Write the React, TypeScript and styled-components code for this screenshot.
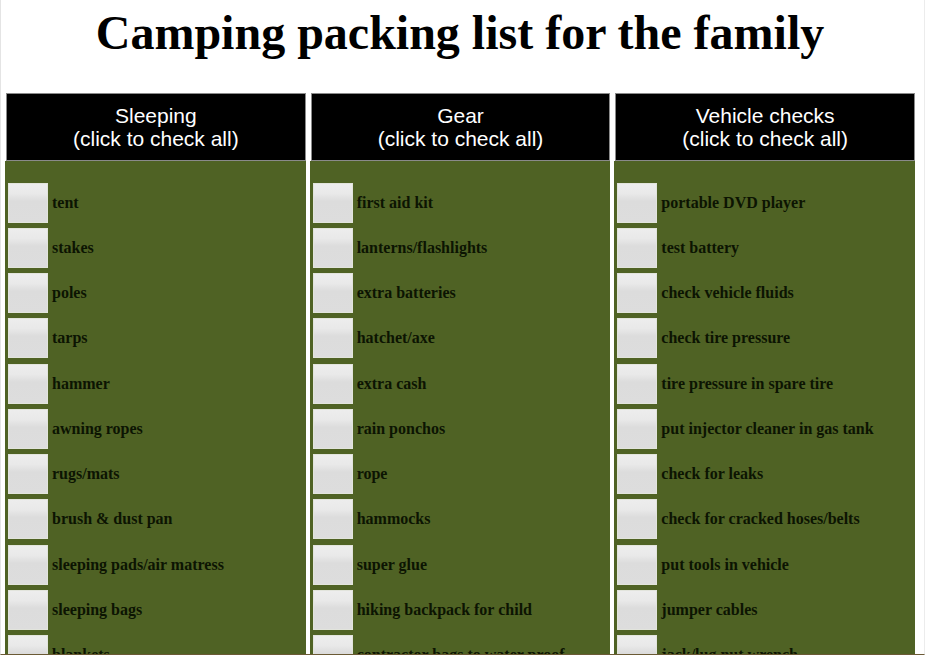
import React, { useState } from "react";
import styled, { createGlobalStyle } from "styled-components";

const GlobalStyle = createGlobalStyle`
  *, *::before, *::after { box-sizing: border-box; }
  body {
    margin: 0;
    background: #fff;
    color: #000;
    font-family: "Liberation Serif", "Times New Roman", serif;
  }
`;

const Page = styled.main`
  height: 100vh;
  overflow: hidden;
  padding: 0 9px 0 4px;
  border-left: 1px solid #e4e4e4;
  border-right: 1px solid #ececec;
  border-bottom: 1px solid #6b5a35;
`;

const Title = styled.h1`
  margin: 0;
  padding: 5px 0 32px;
  font-size: 48px;
  line-height: 56px;
  text-align: center;
`;

const Columns = styled.div`
  display: grid;
  grid-template-columns: repeat(3, minmax(0, 1fr));
  column-gap: 4px;
`;

const Column = styled.section`
  display: flex;
  flex-direction: column;
`;

const CheckAll = styled.button`
  margin: 0 0 0 1px;
  padding: 10px 6px;
  border: 1px solid #8a8a8a;
  border-radius: 0;
  background: #000;
  color: #fff;
  font-family: "Liberation Sans", Arial, sans-serif;
  font-size: 21px;
  line-height: 23px;
  cursor: pointer;
`;

const HeaderLine = styled.span`
  display: block;
`;

const Items = styled.ul`
  display: flex;
  flex-direction: column;
  min-height: 521px;
  margin: 0;
  padding: 19px 3px 4px;
  list-style: none;
  background: #4f6224;
`;

const Item = styled.li`
  display: flex;
  flex: 1;
  align-items: center;
`;

const ItemLabel = styled.label`
  display: flex;
  align-items: center;
  gap: 4px;
  color: #0c1402;
  font-size: 16px;
  font-weight: bold;
  line-height: 18px;
  white-space: nowrap;
  cursor: pointer;
`;

const Tick = styled.input`
  appearance: none;
  flex: none;
  width: 40px;
  height: 40px;
  margin: 0;
  border: 1px solid #e2e4dc;
  background: linear-gradient(#ededed, #e9e9e9 25%, #dcdcdc 45%, #dddddd);
  cursor: pointer;

  &:checked {
    background: #86b83c;
  }
`;

const lists = [
  {
    name: "Sleeping",
    items: [
      "tent", "stakes", "poles", "tarps", "hammer", "awning ropes", "rugs/mats",
      "brush & dust pan", "sleeping pads/air matress", "sleeping bags", "blankets",
    ],
  },
  {
    name: "Gear",
    items: [
      "first aid kit", "lanterns/flashlights", "extra batteries", "hatchet/axe",
      "extra cash", "rain ponchos", "rope", "hammocks", "super glue",
      "hiking backpack for child", "contractor bags to water proof",
    ],
  },
  {
    name: "Vehicle checks",
    items: [
      "portable DVD player", "test battery", "check vehicle fluids",
      "check tire pressure", "tire pressure in spare tire",
      "put injector cleaner in gas tank", "check for leaks",
      "check for cracked hoses/belts", "put tools in vehicle", "jumper cables",
      "jack/lug nut wrench",
    ],
  },
];

function Checklist({ name, items }: { name: string; items: string[] }) {
  const [checked, setChecked] = useState<boolean[]>(items.map(() => false));
  const toggle = (index: number) =>
    setChecked(checked.map((value, i) => (i === index ? !value : value)));
  const toggleAll = () => {
    const next = !checked.every(Boolean);
    setChecked(checked.map(() => next));
  };

  return (
    <Column>
      <CheckAll type="button" onClick={toggleAll}>
        <HeaderLine>{name}</HeaderLine>
        <HeaderLine>(click to check all)</HeaderLine>
      </CheckAll>
      <Items>
        {items.map((item, index) => (
          <Item key={item}>
            <ItemLabel>
              <Tick
                type="checkbox"
                checked={checked[index]}
                onChange={() => toggle(index)}
              />
              {item}
            </ItemLabel>
          </Item>
        ))}
      </Items>
    </Column>
  );
}

export default function App() {
  return (
    <>
      <GlobalStyle />
      <Page>
        <Title>Camping packing list for the family</Title>
        <Columns>
          {lists.map((list) => (
            <Checklist key={list.name} name={list.name} items={list.items} />
          ))}
        </Columns>
      </Page>
    </>
  );
}
